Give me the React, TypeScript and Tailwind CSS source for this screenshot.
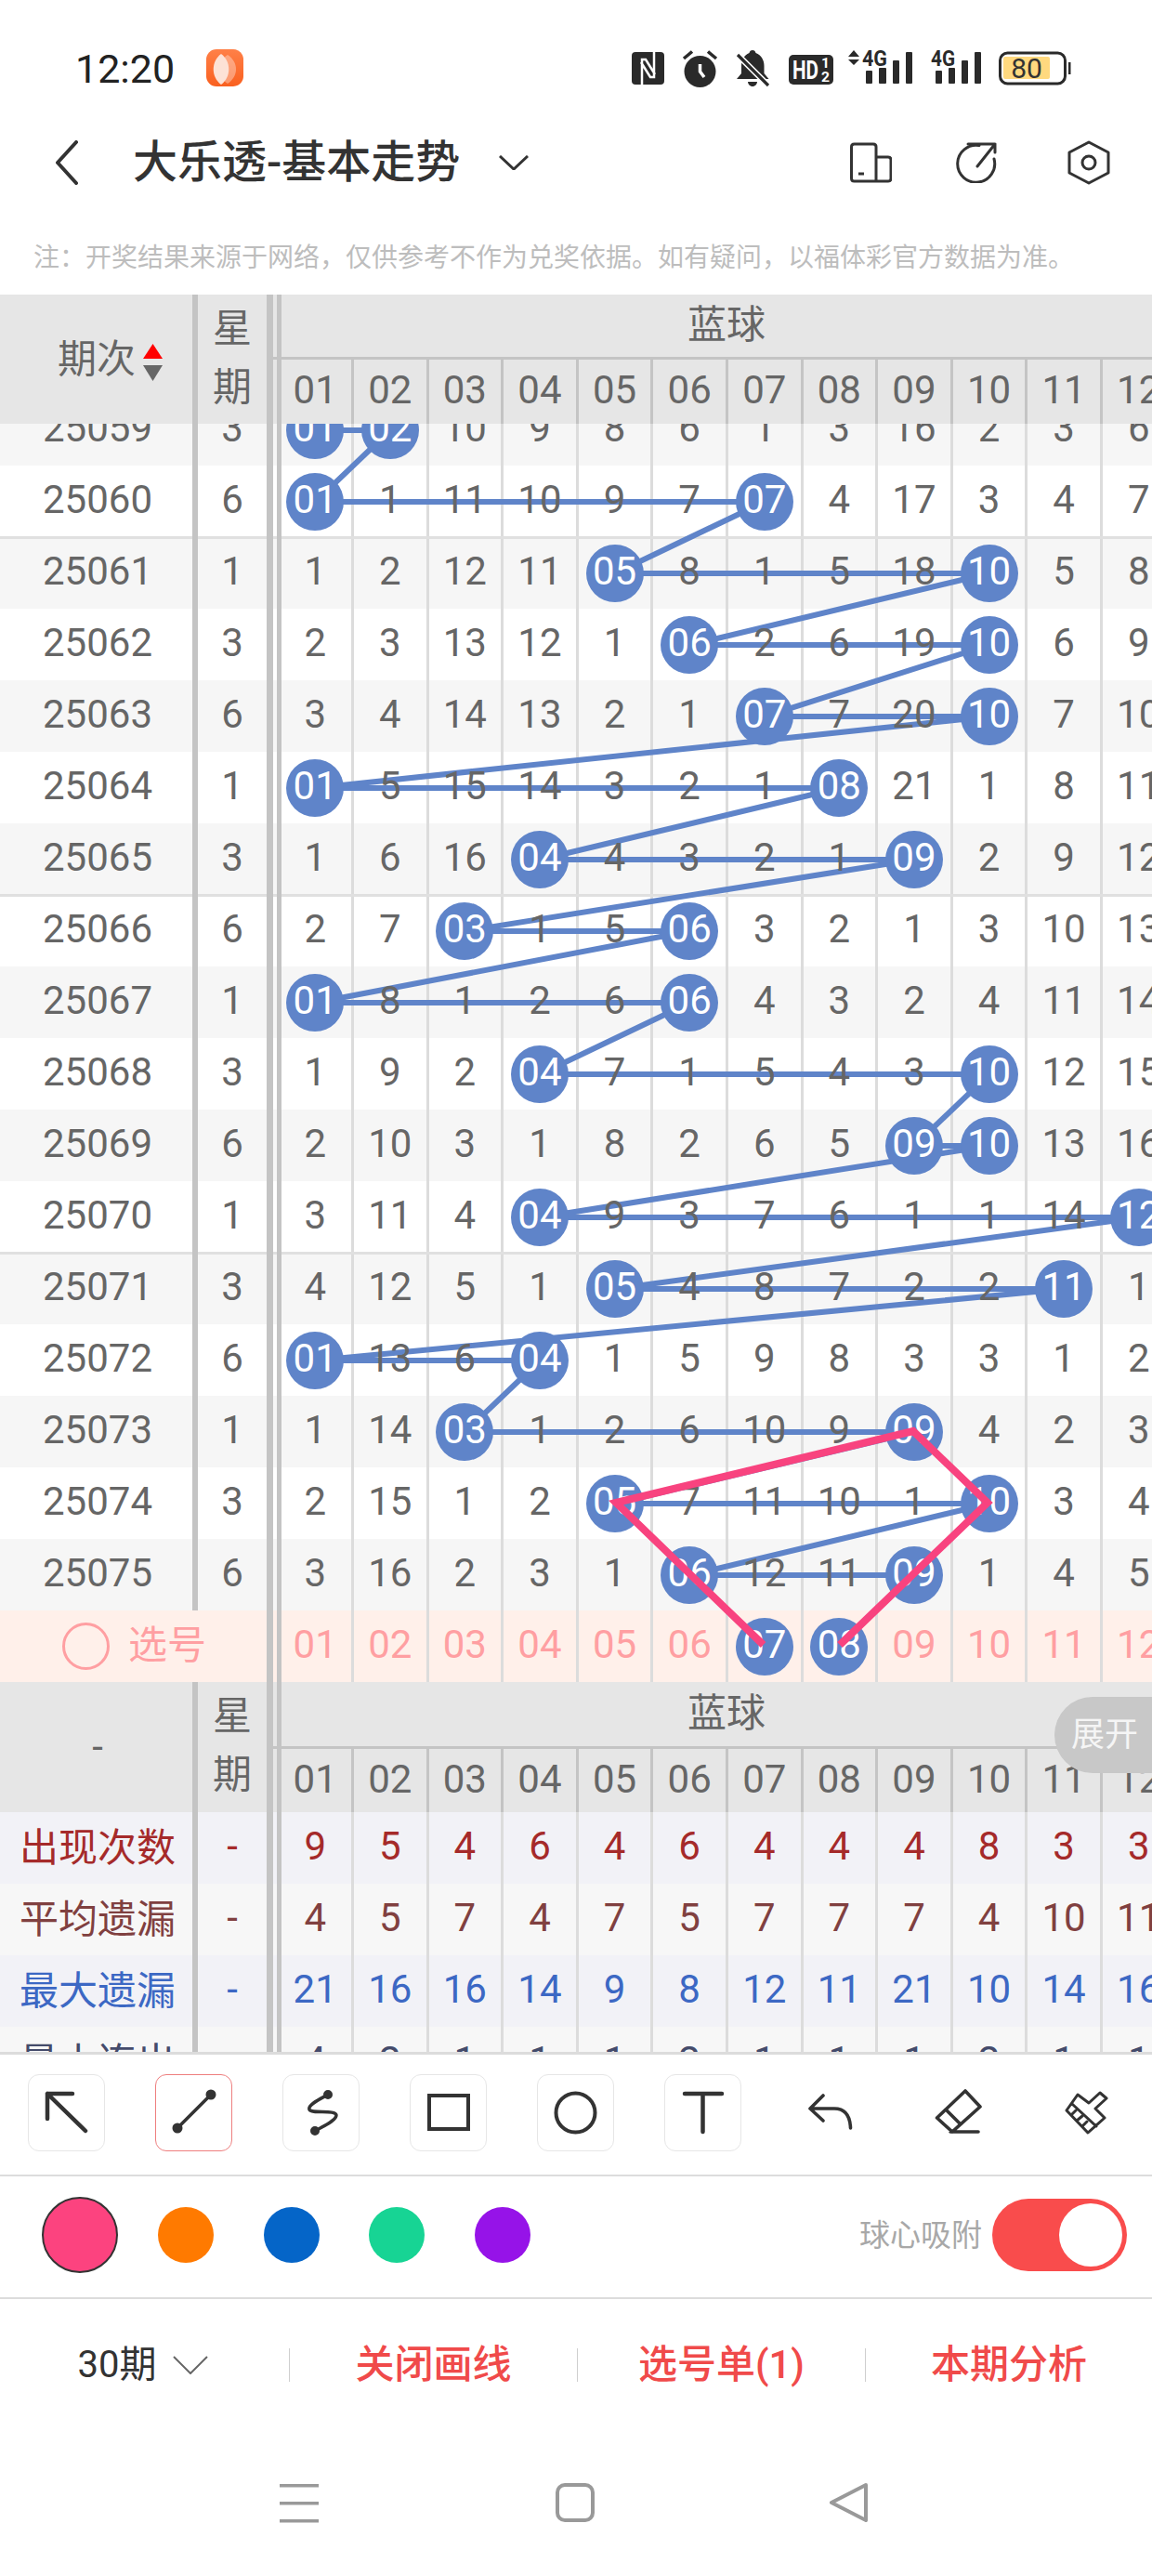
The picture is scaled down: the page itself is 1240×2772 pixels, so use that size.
import React from 'react';

const raw: [string, string, string][] = [
  ['25059', '3', 'b01 b02 10 9 8 6 1 3 16 2 3 6'],
  ['25060', '6', 'b01 1 11 10 9 7 b07 4 17 3 4 7'],
  ['25061', '1', '1 2 12 11 b05 8 1 5 18 b10 5 8'],
  ['25062', '3', '2 3 13 12 1 b06 2 6 19 b10 6 9'],
  ['25063', '6', '3 4 14 13 2 1 b07 7 20 b10 7 10'],
  ['25064', '1', 'b01 5 15 14 3 2 1 b08 21 1 8 11'],
  ['25065', '3', '1 6 16 b04 4 3 2 1 b09 2 9 12'],
  ['25066', '6', '2 7 b03 1 5 b06 3 2 1 3 10 13'],
  ['25067', '1', 'b01 8 1 2 6 b06 4 3 2 4 11 14'],
  ['25068', '3', '1 9 2 b04 7 1 5 4 3 b10 12 15'],
  ['25069', '6', '2 10 3 1 8 2 6 5 b09 b10 13 16'],
  ['25070', '1', '3 11 4 b04 9 3 7 6 1 1 14 b12'],
  ['25071', '3', '4 12 5 1 b05 4 8 7 2 2 b11 1'],
  ['25072', '6', 'b01 13 6 b04 1 5 9 8 3 3 1 2'],
  ['25073', '1', '1 14 b03 1 2 6 10 9 b09 4 2 3'],
  ['25074', '3', '2 15 1 2 b05 7 11 10 1 b10 3 4'],
  ['25075', '6', '3 16 2 3 1 b06 12 11 b09 1 4 5'],
];

const nums = ['01', '02', '03', '04', '05', '06', '07', '08', '09', '10', '11', '12'];
const hasSep = (p: string) => p === '25060' || p === '25065' || p === '25070';

function chainPoints() {
  const pts: string[] = [];
  raw.forEach(([, , v], r) => {
    const cy = 424.3 + 38.7 + 77 * r;
    v.split(' ').forEach((c, i) => {
      if (c.startsWith('b')) pts.push(`${(339.4 + 80.6 * i).toFixed(1)},${cy.toFixed(1)}`);
    });
  });
  return pts.join(' ');
}

function Cell({ v }: { v: string }) {
  const ball = v.startsWith('b');
  return (
    <div className="w-[80.6px] shrink-0 border-r-[3px] border-[#dcdcdc] flex items-center justify-center">
      {ball ? (
        <span className="relative z-10 w-[62px] h-[62px] shrink-0 rounded-full bg-[#5f84c9] text-white flex items-center justify-center">
          <span className="-mt-[3px]">{v.slice(1)}</span>
        </span>
      ) : (
        <span className="relative z-10 -mt-[3px]">{v}</span>
      )}
    </div>
  );
}

function Seps() {
  return (
    <>
      <div className="relative z-[1] w-[7px] shrink-0 bg-[#c4c4c4]" />
      <div className="w-[4px] shrink-0" />
      <div className="relative z-[1] w-[4.7px] -mr-[2.3px] shrink-0 bg-[#c4c4c4]" />
    </>
  );
}

function Row({ p, w, vals, bg }: { p: string; w: string; vals: string[]; bg: string }) {
  return (
    <div className={`flex h-[77px] ${bg}`}>
      <div className="w-[207px] shrink-0 pl-[3px] flex items-center justify-center">
        <span className="-mt-[3px]">{p}</span>
      </div>
      <div className="relative z-[1] w-[6px] shrink-0 bg-[#c4c4c4]" />
      <div className="w-[74px] shrink-0 flex items-center justify-center">
        <span className="-mt-[3px]">{w}</span>
      </div>
      <Seps />
      {vals.map((v, i) => (
        <Cell key={i} v={v} />
      ))}
    </div>
  );
}

function TableHeader({ left, h, h1 }: { left: React.ReactNode; h: string; h1: string }) {
  return (
    <div className={`flex bg-[#e6e6e6] ${h}`}>
      <div className="w-[207px] shrink-0 flex items-center justify-center">{left}</div>
      <div className="w-[6px] shrink-0 bg-[#c4c4c4]" />
      <div className="w-[74px] shrink-0 flex flex-col items-center justify-center text-[42px] leading-[63px] pb-[4px]">
        <span>星</span>
        <span>期</span>
      </div>
      <div className="w-[7px] shrink-0 bg-[#c4c4c4]" />
      <div className="flex-1 flex flex-col min-w-0">
        <div className={`${h1} flex`}>
          <div className="w-[4px] shrink-0" />
          <div className="w-[4.7px] -mr-[2.3px] shrink-0 bg-[#c4c4c4]" />
          <div className="w-[963px] shrink-0 flex items-center justify-center text-[42px] pb-[2px]">蓝球</div>
        </div>
        <div className="h-[3px] shrink-0 bg-[#c4c4c4]" />
        <div className="flex-1 flex">
          <div className="w-[4px] shrink-0" />
          <div className="w-[4.7px] -mr-[2.3px] shrink-0 bg-[#c4c4c4]" />
          {nums.map((n) => (
            <div key={n} className="w-[80.6px] shrink-0 border-r-[3px] border-[#c4c4c4] flex items-center justify-center">
              <span className="-mt-[3px]">{n}</span>
            </div>
          ))}
        </div>
      </div>
    </div>
  );
}

function StatRow({ label, vals, bg, tone }: { label: string; vals: string; bg: string; tone: string }) {
  return (
    <div className={`flex h-[77px] shrink-0 ${bg} ${tone}`}>
      <div className="w-[207px] shrink-0 pl-[3px] flex items-center justify-center">{label}</div>
      <div className="w-[6px] shrink-0 bg-[#c4c4c4]" />
      <div className="w-[74px] shrink-0 flex items-center justify-center">
        <span className="-mt-[3px]">-</span>
      </div>
      <Seps />
      {vals.split(' ').map((v, i) => (
        <Cell key={i} v={v} />
      ))}
    </div>
  );
}

function Tool({ active, children }: { active?: boolean; children?: React.ReactNode }) {
  return (
    <div className={`w-[83px] h-[83px] shrink-0 rounded-[12px] border ${active ? 'border-[#ee7f7f]' : 'border-[#e6e6e6]'}`}>
      <svg width="83" height="83" viewBox="0 0 83 83" fill="none" stroke="#333" strokeWidth="4" strokeLinecap="round" strokeLinejoin="round" className="-m-px">
        {children}
      </svg>
    </div>
  );
}

function Bare({ children }: { children: React.ReactNode }) {
  return (
    <svg width="83" height="83" viewBox="0 0 83 83" fill="none" stroke="#333" strokeWidth="3.6" strokeLinecap="round" strokeLinejoin="round" className="shrink-0">
      {children}
    </svg>
  );
}

function StatusIcons() {
  const d = '#2a2a2a';
  const cond = { fontFamily: 'Roboto, sans-serif', fontWeight: 700 };
  return (
    <svg width="480" height="50" viewBox="675 50 480 50" className="ml-auto mr-[85px] shrink-0">
      <rect x="680" y="57" width="35" height="35" rx="4" fill={d} />
      <path d="M691 92V65H695L705 81M704 57V84H700L690 68" stroke="#fff" strokeWidth="2.500" fill="none" strokeLinejoin="miter" />
      <circle cx="753.500" cy="78" r="17" fill={d} />
      <path d="M736 64L745 56.500M762 56.500L771 64" stroke={d} strokeWidth="3.500" fill="none" />
      <path d="M753.500 70V78L758 84" stroke="#fff" strokeWidth="3.500" fill="none" />
      <path d="M810 55c2 0 3 1 3.500 3 6 2 9 8 9 14v8l5 6H793l5-6v-8c0-6 3-12 8.500-14 .5-2 1.500-3 3.500-3z" fill={d} />
      <path d="M805 89H815C815 92 812 94 810 94S805 92 805 89Z" fill={d} />
      <path d="M790 56L830 96" stroke="#fff" strokeWidth="6.500" fill="none" />
      <path d="M794 60L827 93" stroke={d} strokeWidth="3.200" fill="none" />
      <rect x="849" y="60" width="48" height="32" rx="5" fill={d} />
      <text x="853" y="86" fill="#fff" fontSize="27" textLength="28" lengthAdjust="spacingAndGlyphs" style={cond}>HD</text>
      <text x="884" y="74" fill="#fff" fontSize="15" textLength="9" lengthAdjust="spacingAndGlyphs" style={cond}>1</text>
      <text x="884" y="89" fill="#fff" fontSize="15" textLength="9" lengthAdjust="spacingAndGlyphs" style={cond}>2</text>
      <path d="M913 62L919 55L925 62ZM913 65L919 71L925 65Z" fill={d} />
      <text x="928" y="72" fill={d} fontSize="24" textLength="27" lengthAdjust="spacingAndGlyphs" style={cond}>4G</text>
      <rect x="932" y="77" width="7" height="14" rx="1" fill={d} />
      <rect x="946" y="74" width="8" height="17" rx="1" fill={d} />
      <rect x="961" y="66" width="7" height="25" rx="1" fill={d} />
      <rect x="975" y="57" width="7" height="34" rx="1" fill={d} />
      <text x="1002" y="72" fill={d} fontSize="24" textLength="26" lengthAdjust="spacingAndGlyphs" style={cond}>4G</text>
      <rect x="1007" y="77" width="7" height="14" rx="1" fill={d} />
      <rect x="1021" y="74" width="7" height="17" rx="1" fill={d} />
      <rect x="1035" y="66" width="7" height="25" rx="1" fill={d} />
      <rect x="1049" y="57" width="7" height="34" rx="1" fill={d} />
      <rect x="1076.500" y="58" width="70" height="33" rx="8" fill="none" stroke={d} strokeWidth="3" />
      <rect x="1080" y="62" width="50" height="24" rx="2" fill="#ffd97f" />
      <text x="1105" y="85" textAnchor="middle" fontSize="30" fill="#333" style={{ fontFamily: 'Roboto, sans-serif' }}>80</text>
      <rect x="1150" y="68" width="2.500" height="13" fill={d} />
    </svg>
  );
}

export default function App() {
  return (
    <div className="relative w-[1240px] h-[2772px] overflow-hidden bg-white text-[#666] text-[42px] leading-none [font-family:Roboto,'Noto_Sans_CJK_SC',sans-serif]">
      {/* status bar */}
      <div className="h-[148px] flex items-center pl-[81px] text-[#222]">
        <span className="w-[141px] shrink-0 text-[43px]">12:20</span>
        <svg width="40" height="40" viewBox="0 0 40 40" className="shrink-0 -mt-[2px]">
          <defs>
            <linearGradient id="appg" x1="0" y1="0" x2="0" y2="1">
              <stop offset="0" stopColor="#ff8048" />
              <stop offset="1" stopColor="#f9601f" />
            </linearGradient>
          </defs>
          <rect width="40" height="40" rx="11" fill="url(#appg)" />
          <path d="M23 6C35 14 35 29 23 37C11 29 11 14 23 6Z" fill="#fff" opacity="0.35" />
          <path d="M16 5C27 13 27 30 16 38C5 30 5 13 16 5Z" fill="#fde2d6" />
        </svg>
        <StatusIcons />
      </div>

      {/* nav */}
      <div className="h-[54px] flex items-center pl-[59px] text-[#333]">
        <svg width="26" height="48" viewBox="0 0 26 48" fill="none" stroke="#333" strokeWidth="4" strokeLinecap="round" strokeLinejoin="round" className="shrink-0">
          <path d="M23 2L3 24L23 46" />
        </svg>
        <span className="ml-[58px] w-[394px] shrink-0 text-[48px] font-medium">大乐透-基本走势</span>
        <svg width="32" height="16" viewBox="0 0 32 16" fill="none" stroke="#333" strokeWidth="3" className="shrink-0">
          <path d="M1 1L16 15L31 1" />
        </svg>
        <div className="ml-auto mr-[45px] flex items-center gap-[68px]">
          <svg width="45" height="44" viewBox="0 0 45 44" fill="none" stroke="#333" strokeWidth="3" strokeLinejoin="round" className="shrink-0">
            <path d="M28 16V5Q28 2 25 2H4.500Q1.500 2 1.500 5V39Q1.500 42 4.500 42H41Q44 42 44 39V19Q44 16 41 16H28V42" />
            <path d="M9 34H15" />
          </svg>
          <svg width="45" height="44" viewBox="0 0 45 44" fill="none" stroke="#333" strokeWidth="3" strokeLinecap="round" strokeLinejoin="round" className="shrink-0">
            <path d="M26 3.500A20 20 0 1 0 42 18" />
            <path d="M14 2H43V11M43 2L24 26" />
          </svg>
          <svg width="46" height="48" viewBox="0 0 46 48" fill="none" stroke="#333" strokeWidth="3" strokeLinejoin="round" className="shrink-0 ml-[8px]">
            <path d="M23 2L44 13V35L23 46L2 35V13Z" />
            <circle cx="23" cy="24" r="7" />
          </svg>
        </div>
      </div>

      {/* notice */}
      <div className="mt-[37px] h-[78px] flex items-center pl-[36px] text-[28px] text-[#bdbdbd]">
        {'注\uFF1A开奖结果来源于网络\uFF0C仅供参考不作为兑奖依据。如有疑问\uFF0C以福体彩官方数据为准。'}
      </div>

      {/* sticky header */}
      <TableHeader
        h="h-[139px]"
        h1="h-[67px]"
        left={
          <div className="flex items-center pl-[62px] w-full">
            <span className="whitespace-nowrap text-[42px]">期次</span>
            <svg width="21" height="40" viewBox="0 0 21 40" className="ml-[8px] mt-[6px] shrink-0">
              <path d="M10.500 0L21 16H0Z" fill="#f00" />
              <path d="M0 23H21L10.500 40Z" fill="#666" />
            </svg>
          </div>
        }
      />

      {/* trend body */}
      <div className="relative h-[1354px] overflow-hidden">
        <div className="-mt-[31.7px]">
          {raw.map(([p, w, v], i) => (
            <React.Fragment key={p}>
              <Row p={p} w={w} vals={v.split(' ')} bg={i % 2 === 0 ? 'bg-[#f6f6f6]' : 'bg-white'} />
              {hasSep(p) && <div className="relative h-[3px] -my-[1.5px] bg-[#e0e0e0]" />}
            </React.Fragment>
          ))}
          {/* pick row */}
          <div className="flex h-[77px] bg-[#fff0ea] text-[#ff9fa2]">
            <div className="w-[287px] shrink-0 flex items-center pl-[67px]">
              <span className="w-[51px] h-[51px] rounded-full border-[3px] border-[#ff9fa2] shrink-0" />
              <span className="ml-[20px] -mt-[2px]">选号</span>
            </div>
            <Seps />
            {nums.map((n) => (
              <Cell key={n} v={n === '07' || n === '08' ? `b${n}` : n} />
            ))}
          </div>
        </div>

        <svg width="1240" height="1354" viewBox="0 456 1240 1354" fill="none" className="absolute left-0 top-0">
          <polyline points={chainPoints()} stroke="#5f84c9" strokeWidth="6" strokeLinejoin="round" />
        </svg>
        <svg width="1240" height="1354" viewBox="0 456 1240 1354" fill="none" className="absolute left-0 top-0 z-20">
          <polyline points="821.6,1770 663,1617 983,1540 1063,1617 904,1770" stroke="#f8437f" strokeWidth="8" strokeLinejoin="miter" />
        </svg>
      </div>

      {/* second header */}
      <TableHeader h="h-[140px]" h1="h-[69px]" left={<span className="pl-[3px]">-</span>} />

      {/* stats */}
      <div className="h-[258px] overflow-hidden flex flex-col">
        <StatRow label="出现次数" vals="9 5 4 6 4 6 4 4 4 8 3 3" bg="bg-[#f2f2f7]" tone="text-[#a52a2a]" />
        <StatRow label="平均遗漏" vals="4 5 7 4 7 5 7 7 7 4 10 11" bg="bg-[#f7f7f7]" tone="text-[#804040]" />
        <StatRow label="最大遗漏" vals="21 16 16 14 9 8 12 11 21 10 14 16" bg="bg-[#f2f2f7]" tone="text-[#3c68c4]" />
        <StatRow label="最小连出" vals="4 2 1 1 1 2 1 1 1 2 1 1" bg="bg-[#f7f7f7]" tone="text-[#444b6b]" />
      </div>
      <div className="h-[3px] bg-[#dcdcdc]" />

      {/* tools */}
      <div className="h-[129px] pt-[21px] pl-[30px] flex items-start gap-[54px]">
        <Tool>
          <path d="M21 48V21H48M21 21L62 61" strokeWidth="4.500" />
        </Tool>
        <Tool active>
          <path d="M60 22L24 58" strokeWidth="3.500" />
          <circle cx="60" cy="22" r="3.500" fill="#333" />
          <circle cx="24" cy="58" r="3.500" fill="#333" />
        </Tool>
        <Tool>
          <path d="M49 22C40 27 27 33 29 38C31 43 57 38 58 44C58 50 44 56 35 61" strokeWidth="3.500" />
          <circle cx="49" cy="22" r="3" fill="#333" />
          <circle cx="35" cy="61" r="3" fill="#333" />
        </Tool>
        <Tool>
          <rect x="21" y="23" width="42" height="36" strokeLinejoin="miter" />
        </Tool>
        <Tool>
          <circle cx="41.500" cy="41.500" r="21" />
        </Tool>
        <Tool>
          <path d="M22 21H62M41.500 21V62" strokeWidth="4.500" />
        </Tool>
        <Bare>
          <path d="M34 23L20 37L34 50M20 37H46C57 37 63 44 63.500 58" />
        </Bare>
        <Bare>
          <path d="M50 18L66 35L36 62L19.500 47ZM29 38L45 54M34 62H64" />
        </Bare>
        <Bare>
          <path d="M34 22L46 31L58 20L65 26L53 37L63 47L45 63L22 39ZM28 32L54 56M27 44L32 39M33 50L39 45M39 56L44 51" strokeWidth="3" />
        </Bare>
      </div>
      <div className="h-[2px] bg-[#dcdcdc]" />

      {/* colours */}
      <div className="h-[130px] pb-[4px] pl-[45px] pr-[27px] flex items-center">
        <span className="w-[82px] h-[82px] rounded-full bg-[#fc437f] border-2 border-[#333] shrink-0" />
        <span className="ml-[43px] w-[60px] h-[60px] rounded-full bg-[#ff7a00] shrink-0" />
        <span className="ml-[54px] w-[60px] h-[60px] rounded-full bg-[#0565c8] shrink-0" />
        <span className="ml-[53px] w-[60px] h-[60px] rounded-full bg-[#17d494] shrink-0" />
        <span className="ml-[54px] w-[60px] h-[60px] rounded-full bg-[#9613e8] shrink-0" />
        <span className="ml-auto text-[33px] text-[#a8a8a8]">球心吸附</span>
        <div className="ml-[11px] w-[145px] h-[78px] rounded-full bg-[#f94c4c] flex items-center justify-end pr-[5px] shrink-0">
          <span className="w-[68px] h-[68px] rounded-full bg-white" />
        </div>
      </div>
      <div className="h-[2px] bg-[#dcdcdc]" />

      {/* tabs */}
      <div className="h-[142px] flex items-center font-medium text-[#f04a4a]">
        <div className="w-[311px] flex items-center justify-center text-[40px] font-normal text-[#333] pr-[3px]">
          <span>30期</span>
          <svg width="38" height="20" viewBox="0 0 38 20" fill="none" stroke="#666" strokeWidth="2" className="ml-[18px] shrink-0">
            <path d="M1 1L19 19L37 1" />
          </svg>
        </div>
        <span className="w-px h-[36px] bg-[#cfcfcf] shrink-0" />
        <div className="w-[309px] text-center">关闭画线</div>
        <span className="w-px h-[36px] bg-[#cfcfcf] shrink-0" />
        <div className="w-[309px] text-center">选号单(1)</div>
        <span className="w-px h-[36px] bg-[#cfcfcf] shrink-0" />
        <div className="flex-1 text-center">本期分析</div>
      </div>

      {/* system nav */}
      <div className="h-[156px] flex items-center pl-[301px] pb-[2px]">
        <svg width="42" height="44" viewBox="0 0 42 44" fill="#999" className="shrink-0">
          <rect x="0" y="2" width="42" height="3.500" />
          <rect x="0" y="21" width="42" height="3.500" />
          <rect x="0" y="40" width="42" height="3.500" />
        </svg>
        <svg width="42" height="42" viewBox="0 0 42 42" fill="none" stroke="#999" strokeWidth="4" className="ml-[255px] shrink-0">
          <rect x="2" y="2" width="38" height="38" rx="8" />
        </svg>
        <svg width="42" height="42" viewBox="0 0 42 42" fill="none" stroke="#999" strokeWidth="4" strokeLinejoin="round" className="ml-[253px] shrink-0">
          <path d="M39 2L2 21L39 40Z" />
        </svg>
      </div>

      {/* floating expand button */}
      <div className="absolute right-0 top-[1826px] z-30 w-[105px] h-[82px] rounded-l-full bg-[#c8c8c8] text-[#f5f5f5] text-[36px] flex items-center pl-[18px]">
        展开
      </div>
    </div>
  );
}
